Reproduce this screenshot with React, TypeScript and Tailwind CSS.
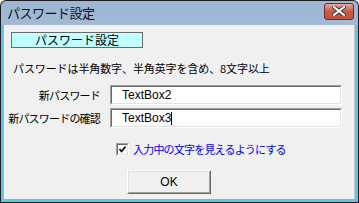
import React from 'react';

const jp = { fontFamily: '"Noto Sans CJK JP", "Noto Sans", sans-serif' };

const TextBox: React.FC<{ value: string; caret?: boolean }> = ({ value, caret }) => (
  <div className="w-[232px] h-[20px] border border-t-[#a0a0a0] border-l-[#a0a0a0] border-b-[#ffffff] border-r-[#ffffff]">
    <div className="h-full bg-white border border-t-[#696969] border-l-[#696969] border-b-[#e3e3e3] border-r-[#e3e3e3] flex items-center pl-[10px]">
      <span className="text-[12px] leading-none text-black" style={{ fontFamily: '"Liberation Sans", Arial, sans-serif' }}>
        {value}
      </span>
      {caret && <span className="w-px h-[13px] bg-black" />}
    </div>
  </div>
);

export default function App() {
  return (
    <div className="w-[359px] h-[203px] bg-[#1d1d1d] p-px pr-[1px] rounded-t-[6px]">
      <div className="w-full h-full rounded-t-[5px] flex flex-col bg-gradient-to-b from-[#9db6d3] to-[#bcd2ea]" style={jp}>
        {/* title bar */}
        <div className="h-[24px] flex items-center justify-between pl-[6px] pr-[4px] shrink-0">
          <span className="text-[13px] text-[#111] tracking-[-0.5px]">パスワード設定</span>
          <div className="w-[30px] h-[17px] mt-[-4px] rounded-[3px] border border-[#6b2e2a] bg-gradient-to-b from-[#e7aa9c] via-[#c85a45] to-[#c9523b] flex items-center justify-center">
            <svg width="14" height="10" viewBox="0 0 14 10">
              <path d="M2 1 L12 9 M12 1 L2 9" stroke="#3a3a3a" strokeWidth="4" strokeLinecap="square" />
              <path d="M2 1 L12 9 M12 1 L2 9" stroke="#ffffff" strokeWidth="2" strokeLinecap="square" />
            </svg>
          </div>
        </div>
        {/* frame + client */}
        <div className="flex-1 flex bg-[#5fc3ec] pl-[2px] pr-[2px] pb-[3px]">
          <div className="w-[1px] bg-[#8fb6dc]" />
          <div className="flex-1 bg-[#f0f0f0] border-r border-[#c8c8c8] flex flex-col text-[11px] text-black">
            <div className="ml-[7px] mt-[7px] w-[132px] h-[16px] bg-[#c0ffff] border border-[#6a6a6a] flex items-center justify-center text-[12px] leading-none">
              パスワード設定
            </div>
            <div className="ml-[9px] mt-[14px] h-[12px] leading-[12px] tracking-[-0.1px]">
              パスワードは半角数字、半角英字を含め、8文字以上
            </div>
            <div className="mt-[11px] flex items-center">
              <div className="w-[96px] text-right tracking-[-0.8px]">新パスワード</div>
              <div className="ml-[10px]"><TextBox value="TextBox2" /></div>
            </div>
            <div className="mt-[3px] flex items-center">
              <div className="w-[96px] text-right tracking-[-0.8px]">新パスワードの確認</div>
              <div className="ml-[10px]"><TextBox value="TextBox3" caret /></div>
            </div>
            <div className="mt-[13px] ml-[112px] flex items-center">
              <div className="w-[13px] h-[13px] border border-t-[#a0a0a0] border-l-[#a0a0a0] border-b-white border-r-white">
                <div className="w-full h-full bg-white border border-t-[#696969] border-l-[#696969] border-b-[#e3e3e3] border-r-[#e3e3e3] flex items-center justify-center">
                  <svg width="7" height="7" viewBox="0 0 7 7">
                    <path d="M0.5 3 L2.5 5.5 L6.5 0.5" stroke="#000" strokeWidth="1.6" fill="none" />
                  </svg>
                </div>
              </div>
              <span className="ml-[4px] text-[#0000ff] tracking-[-0.8px]">入力中の文字を見えるようにする</span>
            </div>
            <div className="mt-[12px] ml-[123px] w-[84px] h-[24px] border border-t-white border-l-white border-b-[#696969] border-r-[#696969]">
              <div className="w-full h-full border border-t-[#e3e3e3] border-l-[#e3e3e3] border-b-[#a0a0a0] border-r-[#a0a0a0] flex items-center justify-center text-[12px]" style={{ fontFamily: '"Liberation Sans", Arial, sans-serif' }}>
                OK
              </div>
            </div>
          </div>
          <div className="w-[1px] bg-[#5fc3ec]" />
        </div>
      </div>
    </div>
  );
}
